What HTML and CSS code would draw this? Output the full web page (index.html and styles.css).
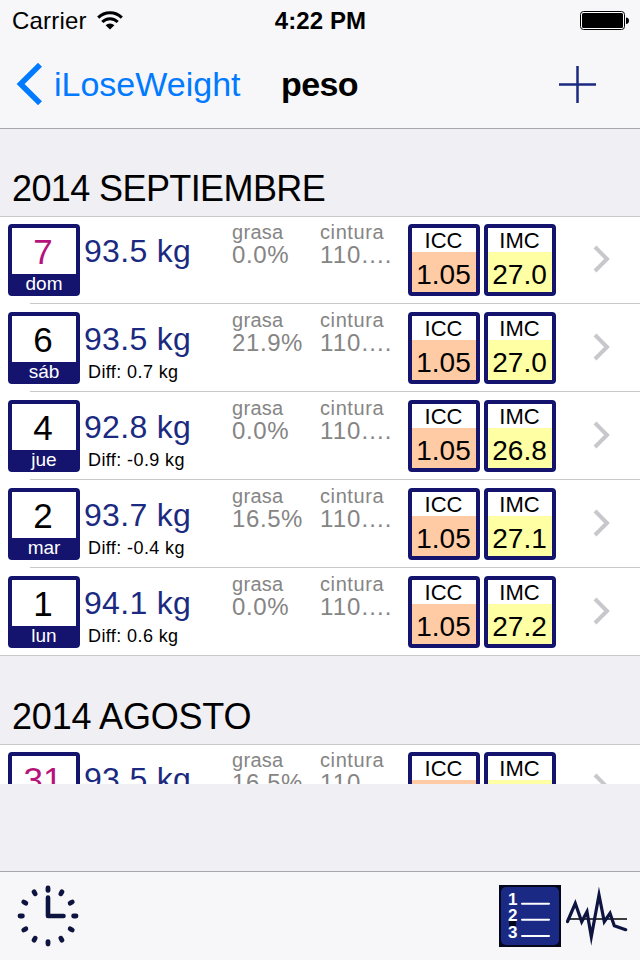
FILE: index.html
```html
<!DOCTYPE html>
<html lang="es">
  <head>
    <meta charset="UTF-8" />
    <title>iLoseWeight - peso</title>
    <link rel="stylesheet" href="styles.css">
  </head>
  <body>
    <header>
      <div class="status-bar">
        <div class="carrier">
          <span>Carrier</span>
          <svg class="wifi" width="26" height="20" viewBox="0 0 26 20">
            <path d="M1.2 6.6a16.5 16.5 0 0 1 23.6 0M5.3 11a10.6 10.6 0 0 1 15.4 0" fill="none" stroke="#000" stroke-width="3" />
            <path d="M8.6 14.2a6.3 6.3 0 0 1 8.8 0L13 18.6z" />
          </svg>
        </div>
        <div class="time">4:22 PM</div>
        <svg class="battery" width="49" height="19" viewBox="0 0 49 19">
          <rect x="0.5" y="0.5" width="44" height="18" rx="3" fill="#fff" stroke="#000" />
          <rect x="2" y="2" width="41" height="15" rx="1.5" />
          <path d="M46 6.5c4 0 4 6.5 0 6.5z" />
        </svg>
      </div>
      <nav>
        <a class="back" href="#">
          <svg width="26" height="42" viewBox="0 0 26 42">
            <path d="M24 1.8L4.6 21 24 40.2" fill="none" stroke="#007aff" stroke-width="5.6" />
          </svg>
          <span>iLoseWeight</span>
        </a>
        <h1>peso</h1>
        <svg class="add" width="37" height="37" viewBox="0 0 37 37">
          <path d="M0 18.5h37M18.5 0v37" stroke="#1b2a80" stroke-width="2.5" />
        </svg>
      </nav>
    </header>

    <main>
      <h2 class="long">2014 SEPTIEMBRE</h2>
      <div class="list" id="septiembre"></div>
      <h2>2014 AGOSTO</h2>
      <div class="list" id="agosto"></div>
    </main>

    <footer>
      <!-- Historial -->
      <svg width="62" height="62" viewBox="0 0 62 62">
        <g id="marks" stroke="#0d1440" stroke-width="4.8" stroke-linecap="round"></g>
        <path d="M31 12.5V31h15.5" fill="none" stroke="#0d1440" stroke-width="4.6" stroke-linecap="round" stroke-linejoin="round" />
      </svg>
      <div class="views">
        <!-- Lista -->
        <svg width="62" height="62" viewBox="0 0 62 62">
          <rect width="62" height="62" fill="#05071c" />
          <rect x="2" y="2" width="58" height="58" rx="5" fill="#1a2a84" />
          <rect x="10" y="35" width="7" height="6" fill="#05071c" />
          <g class="numbers">
            <text x="9" y="19.5">1</text>
            <text x="9" y="36">2</text>
            <text x="9" y="52.5">3</text>
          </g>
          <path d="M23 18.7h27M23 34.8h27M23 51h27" stroke="#fff" stroke-width="2" stroke-linecap="round" />
        </svg>
        <!-- Gráfica -->
        <svg width="62" height="62" viewBox="0 0 62 62">
          <path d="M1 34h60" stroke="#000" stroke-width="1.7" />
          <path d="M1.5 36.5l7.8-18.2 6.4 18.4 5.3-10 4.3 25L33 10l5.3 26.7 5.7-8.4 4.3 12.4 11.4 4" fill="none" stroke="#0d1440" stroke-width="3.2" stroke-miterlimit="8" stroke-linecap="round" />
        </svg>
      </div>
    </footer>

    <script>
const septiembre = [
    { day: 7, name: "dom", weight: "93.5", diff: "", fat: "0.0%", icc: "1.05", imc: "27.0" },
    { day: 6, name: "sáb", weight: "93.5", diff: "0.7", fat: "21.9%", icc: "1.05", imc: "27.0" },
    { day: 4, name: "jue", weight: "92.8", diff: "-0.9", fat: "0.0%", icc: "1.05", imc: "26.8" },
    { day: 2, name: "mar", weight: "93.7", diff: "-0.4", fat: "16.5%", icc: "1.05", imc: "27.1" },
    { day: 1, name: "lun", weight: "94.1", diff: "0.6", fat: "0.0%", icc: "1.05", imc: "27.2" },
];
const agosto = [
    { day: 31, name: "dom", weight: "93.5", diff: "", fat: "16.5%", icc: "1.05", imc: "27.0" },
];

function displayRows(id, rows) {
    document.getElementById(id).innerHTML = rows.map(row => `
        <div class="row">
            <div class="day ${row.name === "dom" ? "sunday" : ""}">
                <div class="number">${row.day}</div>
                <div class="name">${row.name}</div>
            </div>
            <div class="weight">
                <div class="kg">${row.weight} kg</div>
                ${row.diff ? `<div class="diff">Diff: ${row.diff} kg</div>` : ""}
            </div>
            <div class="measure"><div class="label">grasa</div><div class="value">${row.fat}</div></div>
            <div class="measure waist"><div class="label">cintura</div><div class="value">110....</div></div>
            <div class="index icc"><div class="label">ICC</div><div class="value">${row.icc}</div></div>
            <div class="index imc"><div class="label">IMC</div><div class="value">${row.imc}</div></div>
            <svg class="chevron" width="17" height="28" viewBox="0 0 17 28">
                <path d="M2 2l12 12L2 26" fill="none" stroke="#c7c7cc" stroke-width="4" />
            </svg>
        </div>
    `).join("");
}

// Marcas de las horas
function drawMarks() {
    let marks = "";
    for (let i = 0; i < 12; i++) {
        marks += `<path d="M31 3v2.4" transform="rotate(${i * 30} 31 31)" />`;
    }
    document.getElementById("marks").innerHTML = marks;
}

displayRows("septiembre", septiembre);
displayRows("agosto", agosto);
drawMarks();
    </script>
  </body>
</html>
```
FILE: styles.css
```css
* {
  box-sizing: border-box;
}

body {
  font-family: "Liberation Sans", Arial, sans-serif;
  background-color: #efeff4;
  color: #000000;
  margin: 0;
  width: 640px;
  height: 960px;
  display: flex;
  flex-direction: column;
  overflow: hidden;
}

/* Cabecera */
header {
  background-color: #f7f7f9;
  height: 128px;
  flex: none;
  box-shadow: 0 1px 0 #a7a7ab;
  z-index: 1;
}

.status-bar {
  height: 40px;
  padding: 1px 11px 0 12px;
  display: grid;
  grid-template-columns: 1fr auto 1fr;
  align-items: center;
  font-size: 24px;
}

.carrier {
  display: flex;
  align-items: center;
  gap: 10px;
}

.carrier span {
  letter-spacing: 0.2px;
}

.time {
  font-weight: bold;
  letter-spacing: 0.1px;
}

.battery {
  justify-self: end;
}

nav {
  height: 88px;
  padding: 0 44px 0 16px;
  display: grid;
  grid-template-columns: 265px 1fr auto;
  align-items: center;
}

.back {
  display: flex;
  align-items: center;
  gap: 12px;
  color: #007aff;
  font-size: 34px;
  text-decoration: none;
}

h1 {
  margin: 0;
  font-size: 34px;
  letter-spacing: -0.6px;
}

/* Lista de pesos */
main {
  height: 656px;
  flex: none;
  overflow: hidden;
}

h2 {
  margin: 0;
  height: 88px;
  padding: 40px 12px 0;
  font-size: 36px;
  font-weight: 400;
  line-height: 41px;
  letter-spacing: -0.2px;
}

h2.long {
  letter-spacing: -0.6px;
}

.row {
  height: 88px;
  padding: 8px 30px 8px 8px;
  display: grid;
  grid-template-columns: 76px 148px 88px 88px 76px 72px 1fr;
  background: linear-gradient(#c8c7cc, #c8c7cc) 30px 100% / 100% 1px no-repeat #ffffff;
}

.row:first-child {
  box-shadow: inset 0 1px 0 #c8c7cc;
}

.row:last-child {
  background-position: 0 100%;
}

.day,
.index {
  width: 72px;
  height: 72px;
  border: 4px solid #14146e;
  border-radius: 4px;
  text-align: center;
}

.day .number {
  height: 46px;
  padding: 1px 2px 0 0;
  font-size: 35px;
  line-height: 46px;
}

.day.sunday .number {
  color: #b5127a;
}

.day .name {
  height: 18px;
  background-color: #14146e;
  color: #ffffff;
  font-size: 19px;
  line-height: 20px;
}

.weight .kg {
  padding-top: 6px;
  color: #1b2a80;
  font-size: 32px;
  line-height: 43px;
  letter-spacing: 0.3px;
}

.weight .diff {
  padding-left: 4px;
  font-size: 18px;
  line-height: 23px;
  letter-spacing: 0.4px;
}

.measure {
  margin-top: -3px;
  color: #858585;
}

.measure .label {
  font-size: 20px;
  line-height: 22px;
  letter-spacing: 0.3px;
}

.measure .value {
  font-size: 24px;
  line-height: 23px;
  letter-spacing: 0.6px;
}

.waist .label {
  letter-spacing: 0.6px;
}

.waist .value {
  letter-spacing: 1.1px;
}

.index .label {
  height: 24px;
  padding-right: 1px;
  font-size: 22px;
  line-height: 25px;
}

.index .value {
  height: 40px;
  padding-right: 1px;
  font-size: 28px;
  line-height: 45px;
}

.icc .value {
  background-color: #ffcba4;
}

.imc .value {
  background-color: #ffffa3;
}

.chevron {
  margin-top: 21px;
  justify-self: end;
}

/* Barra inferior */
footer {
  margin-top: auto;
  height: 89px;
  flex: none;
  padding: 0 12px 0 17px;
  border-top: 1px solid #a7a7ab;
  background-color: #f7f7f9;
  display: flex;
  align-items: center;
  justify-content: space-between;
}

.views {
  display: flex;
  gap: 5px;
}

.numbers {
  fill: #ffffff;
  font-size: 17px;
  font-weight: bold;
}
```
